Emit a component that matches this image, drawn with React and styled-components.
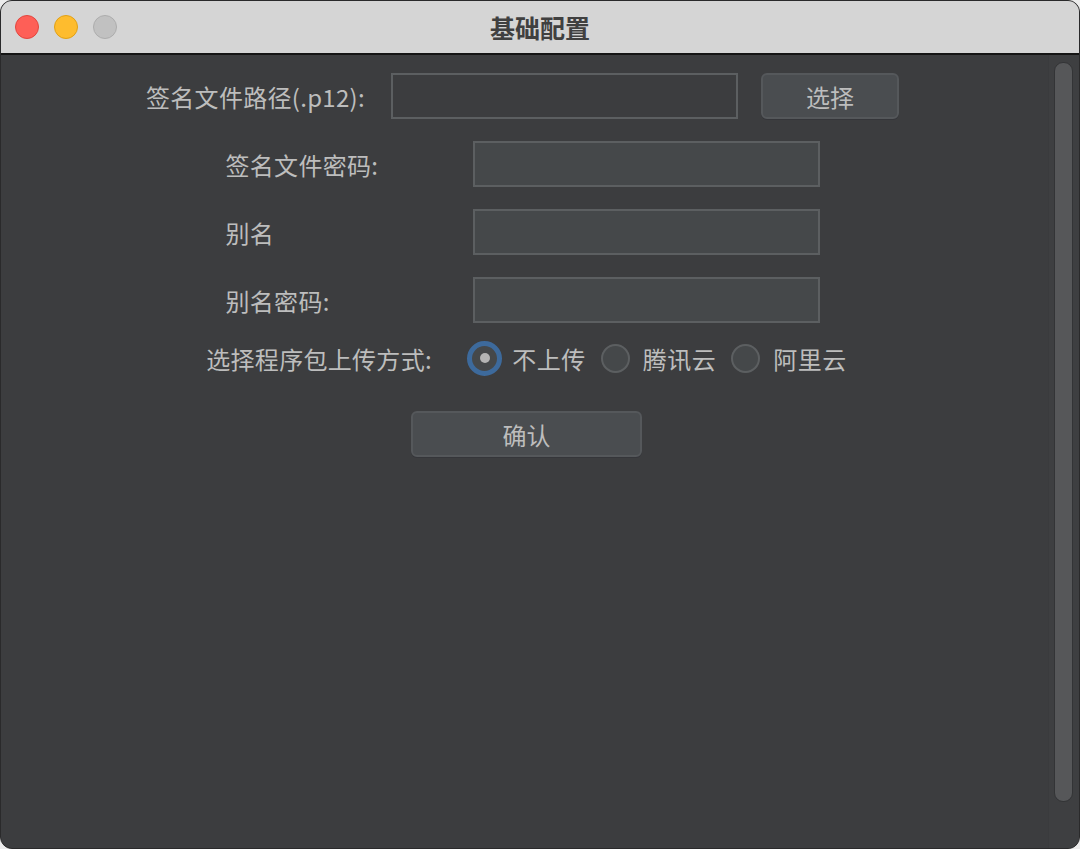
import React from 'react';
import styled, { createGlobalStyle } from 'styled-components';

const GlobalStyle = createGlobalStyle`
    html, body {
        margin: 0;
        padding: 0;
        background: #ececec;
    }
    * {
        box-sizing: border-box;
    }
`;

const Window = styled.div`
    width: 1080px;
    height: 849px;
    display: flex;
    flex-direction: column;
    border-radius: 12px;
    overflow: hidden;
    background: #3c3d3f;
    border: 1px solid #2a2a2b;
    font-family: "Noto Sans CJK SC", "Noto Sans", sans-serif;
`;

const TitleBar = styled.div`
    position: relative;
    height: 54px;
    flex-shrink: 0;
    display: flex;
    align-items: center;
    justify-content: center;
    background: #d5d5d5;
    border-bottom: 2px solid #151515;
`;

const Lights = styled.div`
    position: absolute;
    left: 14px;
    top: 14px;
    display: flex;
    gap: 15px;
`;

const Light = styled.span`
    width: 24px;
    height: 24px;
    border-radius: 50%;
    background: ${props => props.color};
    border: 1px solid ${props => props.edge};
`;

const Title = styled.div`
    font-size: 25px;
    font-weight: 700;
    color: #404040;
`;

const Body = styled.div`
    flex: 1;
    display: flex;
`;

const Content = styled.div`
    flex: 1;
    display: flex;
    flex-direction: column;
    align-items: center;
    padding-top: 18px;
    padding-right: 4px;
`;

const Row = styled.div`
    display: flex;
    align-items: center;
    height: 46px;
    margin-bottom: ${props => props.gap || 22}px;
    margin-left: ${props => props.indent || 0}px;
`;

const Label = styled.div`
    width: ${props => props.width ? props.width + 'px' : 'auto'};
    margin-right: ${props => props.space || 0}px;
    font-size: 24px;
    letter-spacing: 0.3px;
    color: #bdbdbd;
    white-space: nowrap;
`;

const Input = styled.div`
    width: 347px;
    height: 46px;
    background: ${props => props.plain ? '#3c3d3f' : '#45484a'};
    border: 2px solid #5c5f61;
`;

const Button = styled.button`
    width: ${props => props.width}px;
    height: 46px;
    margin-left: ${props => props.offset || 0}px;
    background: #4a4d50;
    border: 2px solid #55585b;
    border-radius: 6px;
    color: #bdbdbd;
    font-family: inherit;
    font-size: 24px;
    padding: 0;
    box-shadow: 0 1px 0 #35363a;
`;

const RadioGroup = styled.div`
    display: flex;
    align-items: center;
`;

const RadioItem = styled.div`
    display: flex;
    align-items: center;
    margin-right: 14px;
    font-size: 24px;
    letter-spacing: 0.5px;
    color: #bdbdbd;
    &:last-child {
        margin-right: 0;
    }
`;

const RadioMark = styled.span`
    width: ${props => props.checked ? 35 : 29}px;
    height: ${props => props.checked ? 35 : 29}px;
    margin-right: ${props => props.checked ? 10 : 13}px;
    margin-left: ${props => props.checked ? 0 : 1}px;
    border-radius: 50%;
    display: flex;
    align-items: center;
    justify-content: center;
    background: #45484a;
    border: ${props => props.checked ? '5px solid #3d6a9c' : '2px solid #5c5f61'};

    &::after {
        content: '';
        display: ${props => props.checked ? 'block' : 'none'};
        width: 10px;
        height: 10px;
        border-radius: 50%;
        background: #b4b4b4;
    }
`;

const ScrollTrack = styled.div`
    width: 31px;
    flex-shrink: 0;
    padding: 7px 6px 46px 5px;
    background: #3e3f41;
    border-left: 1px solid #3a3b3d;
`;

const ScrollThumb = styled.div`
    height: 100%;
    border-radius: 9px;
    background: #565759;
    border: 1px solid #333436;
`;

const uploadOptions = [
    { name: '不上传', checked: true },
    { name: '腾讯云' },
    { name: '阿里云' },
];

function App() {
    return (
        <>
            <GlobalStyle />
            <Window>
                <TitleBar>
                    <Lights>
                        <Light color="#fe5f57" edge="#e2463f" />
                        <Light color="#febc2e" edge="#e1a116" />
                        <Light color="#c1c1c1" edge="#adadad" />
                    </Lights>
                    <Title>基础配置</Title>
                </TitleBar>
                <Body>
                    <Content>
                        <Row>
                            <Label width={230} space={15}>签名文件路径(.p12):</Label>
                            <Input plain />
                            <Button width={138} offset={23}>选择</Button>
                        </Row>
                        <Row>
                            <Label width={247}>签名文件密码:</Label>
                            <Input />
                        </Row>
                        <Row>
                            <Label width={247}>别名</Label>
                            <Input />
                        </Row>
                        <Row gap={12}>
                            <Label width={247}>别名密码:</Label>
                            <Input />
                        </Row>
                        <Row gap={30} indent={8}>
                            <Label width={233} space={28}>选择程序包上传方式:</Label>
                            <RadioGroup>
                                {uploadOptions.map(opt => (
                                    <RadioItem key={opt.name}>
                                        <RadioMark checked={opt.checked} />
                                        {opt.name}
                                    </RadioItem>
                                ))}
                            </RadioGroup>
                        </Row>
                        <Button width={231} offset={8}>确认</Button>
                    </Content>
                    <ScrollTrack>
                        <ScrollThumb />
                    </ScrollTrack>
                </Body>
            </Window>
        </>
    );
}

export default App;
